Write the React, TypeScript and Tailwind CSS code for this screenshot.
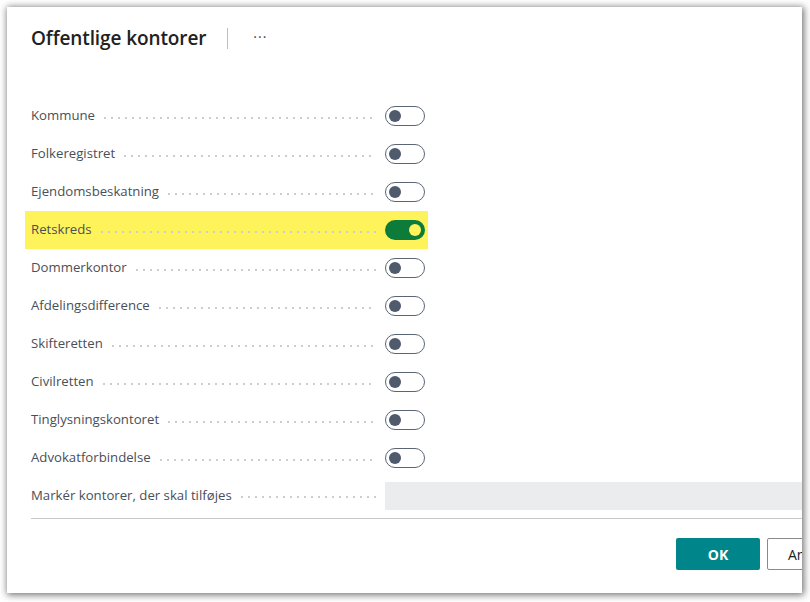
import React from "react";

const rows: { label: string; on?: boolean }[] = [
  { label: "Kommune" },
  { label: "Folkeregistret" },
  { label: "Ejendomsbeskatning" },
  { label: "Retskreds", on: true },
  { label: "Dommerkontor" },
  { label: "Afdelingsdifference" },
  { label: "Skifteretten" },
  { label: "Civilretten" },
  { label: "Tinglysningskontoret" },
  { label: "Advokatforbindelse" },
];

function Leader() {
  return (
    <div className="flex-1 h-[2px] mt-[3px] ml-[9px] mr-[9px] bg-[linear-gradient(to_right,#cdcdcd_2px,transparent_2px)] bg-[length:7px_2px] bg-repeat-x" />
  );
}

function Toggle({ on }: { on?: boolean }) {
  if (on) {
    return (
      <div className="w-[40px] h-[20px] rounded-full bg-[#0d7b3a] flex items-center justify-end pr-[4px]">
        <div className="w-[12px] h-[12px] rounded-full bg-[#fff35c]" />
      </div>
    );
  }
  return (
    <div className="w-[40px] h-[20px] rounded-full border border-[#5b6575] bg-white flex items-center pl-[3px]">
      <div className="w-[12px] h-[12px] rounded-full bg-[#4f5a6c]" />
    </div>
  );
}

export default function App() {
  return (
    <div className="w-[810px] h-[602px] bg-white overflow-hidden pt-[7px] pl-[7px] font-['Open_Sans','Noto_Sans',sans-serif]">
      <div className="w-[795px] h-[586px] bg-white shadow-[1px_1px_7px_1px_rgba(0,0,0,0.55)] overflow-hidden flex flex-col">
        <div className="flex items-center pl-[24px] pt-[17px] h-[45px]">
          <div className="text-[19px] font-semibold text-[#212121] leading-[28px] tracking-[-0.1px]">
            Offentlige kontorer
          </div>
          <div className="w-px h-[21px] bg-[#bdbdbd] ml-[21px]" />
          <div className="ml-[25px] text-[#444] text-[14px] tracking-[1px] -mt-[4px]">···</div>
        </div>
        <div className="mt-[45px] pl-[18px] flex flex-col">
          {rows.map((r) => (
            <div
              key={r.label}
              className={
                "w-[403px] h-[38px] pl-[6px] pr-[3px] flex items-center " +
                (r.on ? "bg-[#fff35c]" : "")
              }
            >
              <span className="text-[13.2px] text-[#4a4f57] whitespace-nowrap">{r.label}</span>
              <Leader />
              <Toggle on={r.on} />
            </div>
          ))}
          <div className="h-[38px] pl-[6px] flex items-center">
            <div className="w-[354px] flex items-center">
              <span className="text-[13.2px] text-[#4a4f57] whitespace-nowrap">Markér kontorer, der skal tilføjes</span>
              <Leader />
            </div>
            <div className="flex-1 h-[28px] bg-[#ebecee]" />
          </div>
        </div>
        <div className="ml-[24px] mt-[3px] h-px bg-[#c8c8c8]" />
        <div className="flex justify-end items-start pt-[19px] -mr-[49px] gap-[7px]">
          <button className="w-[84px] h-[32px] rounded-[2px] bg-[#00868a] text-white text-[14px] font-bold">
            OK
          </button>
          <button className="w-[84px] h-[32px] rounded-[2px] bg-white border border-[#8a8a8a] text-[#212121] text-[14px] text-left pl-[20px]">
            Annuller
          </button>
        </div>
      </div>
    </div>
  );
}
